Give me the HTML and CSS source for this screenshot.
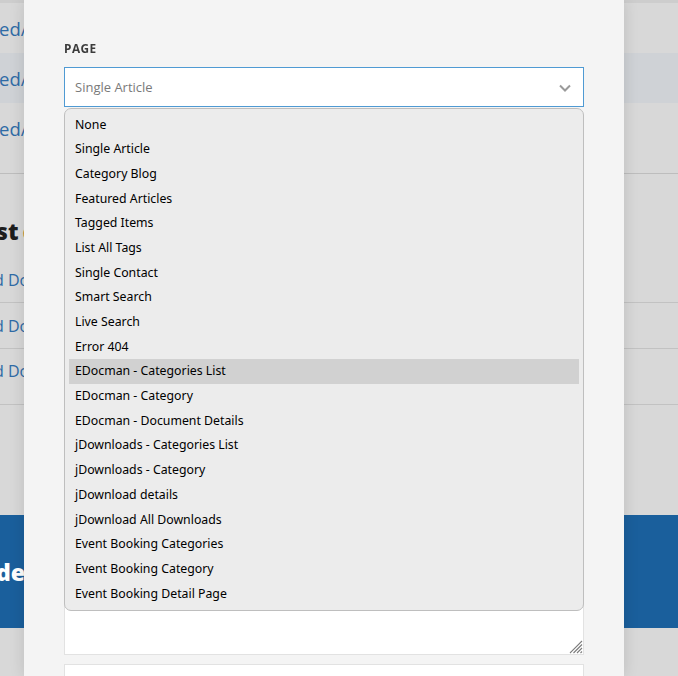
FILE: index.html
```html
<!DOCTYPE html>
<html>
<head>
<meta charset="utf-8">
<link rel="stylesheet" href="styles.css">
</head>
<body>
<div class="page">
  <div class="toplist">
    <div class="trow"><span class="link">ed/blog</span></div>
    <div class="trow hl"><span class="link">ed/blog</span></div>
    <div class="trow"><span class="link">ed/recent</span></div>
  </div>
  <h2 class="sect">st <span class="acc">c</span>ategories</h2>
  <div class="docs">
    <div class="drow"><span class="link sm">d Documents</span></div>
    <div class="drow"><span class="link sm">d Documents</span></div>
    <div class="drow last"><span class="link sm">d Documents</span></div>
  </div>
  <div class="band"><span>de</span></div>
</div>

<div class="modal">
  <div class="field">
    <label class="lbl">Page</label>
    <div class="selectwrap">
      <div class="select">
        <span class="sval">Single Article</span>
        <svg class="chev" width="14" height="10" viewBox="0 0 14 10"><path d="M2 2.5 L7 7.5 L12 2.5" fill="none" stroke="#9a9a9a" stroke-width="2"/></svg>
      </div>
      <ul class="dropdown">
        <li>None</li>
        <li>Single Article</li>
        <li>Category Blog</li>
        <li>Featured Articles</li>
        <li>Tagged Items</li>
        <li>List All Tags</li>
        <li>Single Contact</li>
        <li>Smart Search</li>
        <li>Live Search</li>
        <li>Error 404</li>
        <li class="on">EDocman - Categories List</li>
        <li>EDocman - Category</li>
        <li>EDocman - Document Details</li>
        <li>jDownloads - Categories List</li>
        <li>jDownloads - Category</li>
        <li>jDownload details</li>
        <li>jDownload All Downloads</li>
        <li>Event Booking Categories</li>
        <li>Event Booking Category</li>
        <li>Event Booking Detail Page</li>
      </ul>
    </div>
    <div class="textarea">
      <svg class="grip" width="14" height="14" viewBox="0 0 14 14"><path d="M13 1 L1 13 M13 4.5 L4.5 13 M13 8 L8 13 M13 11.5 L11.5 13" stroke="#7c7c7c" stroke-width="1.1" fill="none"/></svg>
    </div>
    <div class="input"></div>
  </div>
</div>
</body>
</html>
```

FILE: styles.css
```css
html, body {
  margin: 0;
  padding: 0;
  height: 100%;
  overflow: hidden;
}
body {
  background: #d8d8d8;
  font-family: "Open Sans", "Noto Sans", sans-serif;
}
.page {
  border-top: 3px solid #cdcdcd;
}
.toplist {
  padding-bottom: 20px;
  border-bottom: 1px solid #bdbdbd;
}
.trow {
  height: 50px;
  display: flex;
  align-items: center;
  margin-left: -1px;
}
.trow.hl {
  background: #cfd2d6;
}
.link {
  color: #2f6ba6;
  font-size: 18.5px;
  white-space: nowrap;
}
.link.sm {
  font-size: 16px;
}
.sect {
  margin: 0;
  padding-top: 42px;
  height: 30px;
  line-height: 30px;
  font-size: 23px;
  font-weight: 800;
  color: #1d1d1d;
  margin-left: -4px;
  word-spacing: -2px;
  white-space: nowrap;
}
.acc {
  color: #b9752c;
}
.docs {
  padding-top: 11px;
}
.drow {
  height: 45px;
  display: flex;
  align-items: center;
  border-bottom: 1px solid #c2c2c2;
  margin-left: -6px;
}
.drow.last {
  height: 56px;
  padding-bottom: 11px;
  box-sizing: border-box;
}
.band {
  margin-top: 110px;
  height: 113px;
  background: #1a5f9c;
  display: flex;
  align-items: center;
  color: #fff;
  font-size: 23px;
  font-weight: 800;
}
.band span {
  margin-left: -4px;
}
.modal {
  position: fixed;
  left: 24px;
  top: 0;
  width: 600px;
  height: 100%;
  background: #f4f4f4;
  box-shadow: 0 0 14px rgba(0, 0, 0, 0.13);
  box-sizing: border-box;
  padding: 41px 40px 0 40px;
}
.field {
  width: 520px;
}
.lbl {
  display: block;
  font-family: "Open Sans", sans-serif;
  font-size: 11.8px;
  font-weight: 700;
  letter-spacing: 0.5px;
  color: #3c3c3c;
  text-transform: uppercase;
  line-height: 14px;
  margin-bottom: 12px;
}
.selectwrap {
  position: relative;
}
.select {
  height: 40px;
  box-sizing: border-box;
  width: 520px;
  border: 1px solid #4f9ad3;
  background: #fff;
  display: flex;
  align-items: center;
  justify-content: space-between;
  padding: 0 11px 0 10px;
}
.sval {
  font-size: 13px;
  color: #7a7a7a;
}
.chev {
  display: block;
  margin-top: 1px;
}
.dropdown {
  position: absolute;
  left: 0;
  top: 41px;
  width: 520px;
  height: 503px;
  box-sizing: border-box;
  margin: 0;
  padding: 3.5px 4px;
  list-style: none;
  background: #ececec;
  border: 1px solid #bebebe;
  border-radius: 7px;
  z-index: 2;
  font-family: "Noto Sans", sans-serif;
  font-size: 12.3px;
  color: #000;
}
.dropdown li {
  height: 24.7px;
  line-height: 24.7px;
  padding-left: 6px;
  white-space: nowrap;
}
.dropdown li.on {
  background: #d1d1d1;
}
.textarea {
  margin-top: 10px;
  height: 538px;
  box-sizing: border-box;
  background: #fff;
  border: 1px solid #e2e2e2;
  position: relative;
}
.grip {
  position: absolute;
  right: 0;
  bottom: 0;
}
.input {
  margin-top: 9px;
  height: 40px;
  background: #fff;
  border: 1px solid #e2e2e2;
}
```
